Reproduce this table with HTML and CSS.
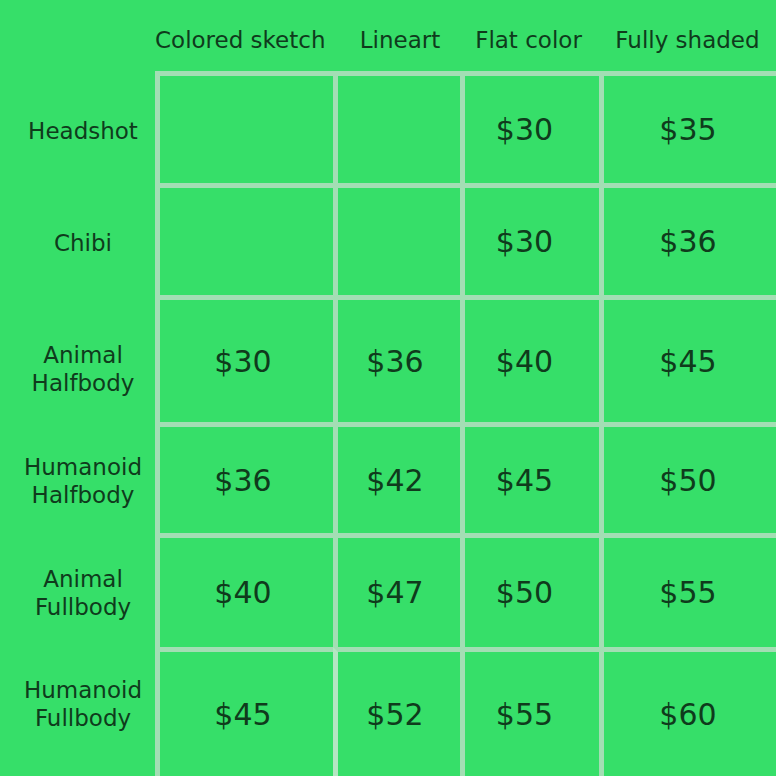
FILE: index.html
```html
<!DOCTYPE html>
<html lang="en">
<head>
<meta charset="utf-8">
<title>Price sheet</title>
<link rel="stylesheet" href="styles.css">
</head>
<body>
<div class="sheet">
  <div class="corner"></div>
  <div class="head h1">Colored sketch</div>
  <div class="head h2">Lineart</div>
  <div class="head h3">Flat color</div>
  <div class="head h4">Fully shaded</div>

  <div class="label r1">Headshot</div>
  <div class="cell c1"></div>
  <div class="cell c2"></div>
  <div class="cell c3">$30</div>
  <div class="cell c4">$35</div>

  <div class="label r2">Chibi</div>
  <div class="cell c1"></div>
  <div class="cell c2"></div>
  <div class="cell c3">$30</div>
  <div class="cell c4">$36</div>

  <div class="label r3">Animal<br>Halfbody</div>
  <div class="cell c1">$30</div>
  <div class="cell c2">$36</div>
  <div class="cell c3">$40</div>
  <div class="cell c4">$45</div>

  <div class="label r4">Humanoid<br>Halfbody</div>
  <div class="cell c1">$36</div>
  <div class="cell c2">$42</div>
  <div class="cell c3">$45</div>
  <div class="cell c4">$50</div>

  <div class="label r5">Animal<br>Fullbody</div>
  <div class="cell c1">$40</div>
  <div class="cell c2">$47</div>
  <div class="cell c3">$50</div>
  <div class="cell c4">$55</div>

  <div class="label r6">Humanoid<br>Fullbody</div>
  <div class="cell c1">$45</div>
  <div class="cell c2 light">$52</div>
  <div class="cell c3">$55</div>
  <div class="cell c4">$60</div>
</div>
</body>
</html>
```

FILE: styles.css
```css
html, body {
  margin: 0;
  padding: 0;
  background: #36df69;
}

body {
  width: 776px;
  height: 776px;
  overflow: hidden;
  font-family: "DejaVu Sans", Verdana, sans-serif;
  color: #0f3b1c;
}

.sheet {
  display: grid;
  grid-template-columns: 155px 178px 127px 139px 177px;
  grid-template-rows: 71px 112px 112px 127px 111px 114px 129px;
  width: 776px;
  height: 776px;
}

.head {
  font-size: 23px;
  line-height: 28px;
  text-align: center;
  padding-top: 26px;
  white-space: nowrap;
}

.h1 { padding-right: 8px; }
.h2 { padding-left: 7px; }
.h3 { padding-right: 2px; }
.h4 { padding-right: 0; }

.label {
  display: flex;
  align-items: center;
  justify-content: center;
  text-align: center;
  font-size: 23px;
  line-height: 28px;
  padding-left: 11px;
  box-sizing: border-box;
}

.r1 { padding-top: 8px; }
.r2 { padding-top: 8px; }
.r3 { padding-top: 21px; }
.r4 { padding-top: 7px; }
.r5 { padding-top: 6px; }
.r6 { padding-bottom: 15px; }

.cell {
  box-sizing: border-box;
  border-top: 5px solid #a3deb4;
  border-left: 5px solid #a3deb4;
  display: flex;
  align-items: center;
  justify-content: center;
  font-size: 30px;
}

.c1 { padding-right: 7px; }
.c2 { padding-right: 8px; }
.c3 { padding-right: 15px; }
.c4 { padding-right: 4px; }

.light {
  border-left-color: #b4e6c2;
}
```
